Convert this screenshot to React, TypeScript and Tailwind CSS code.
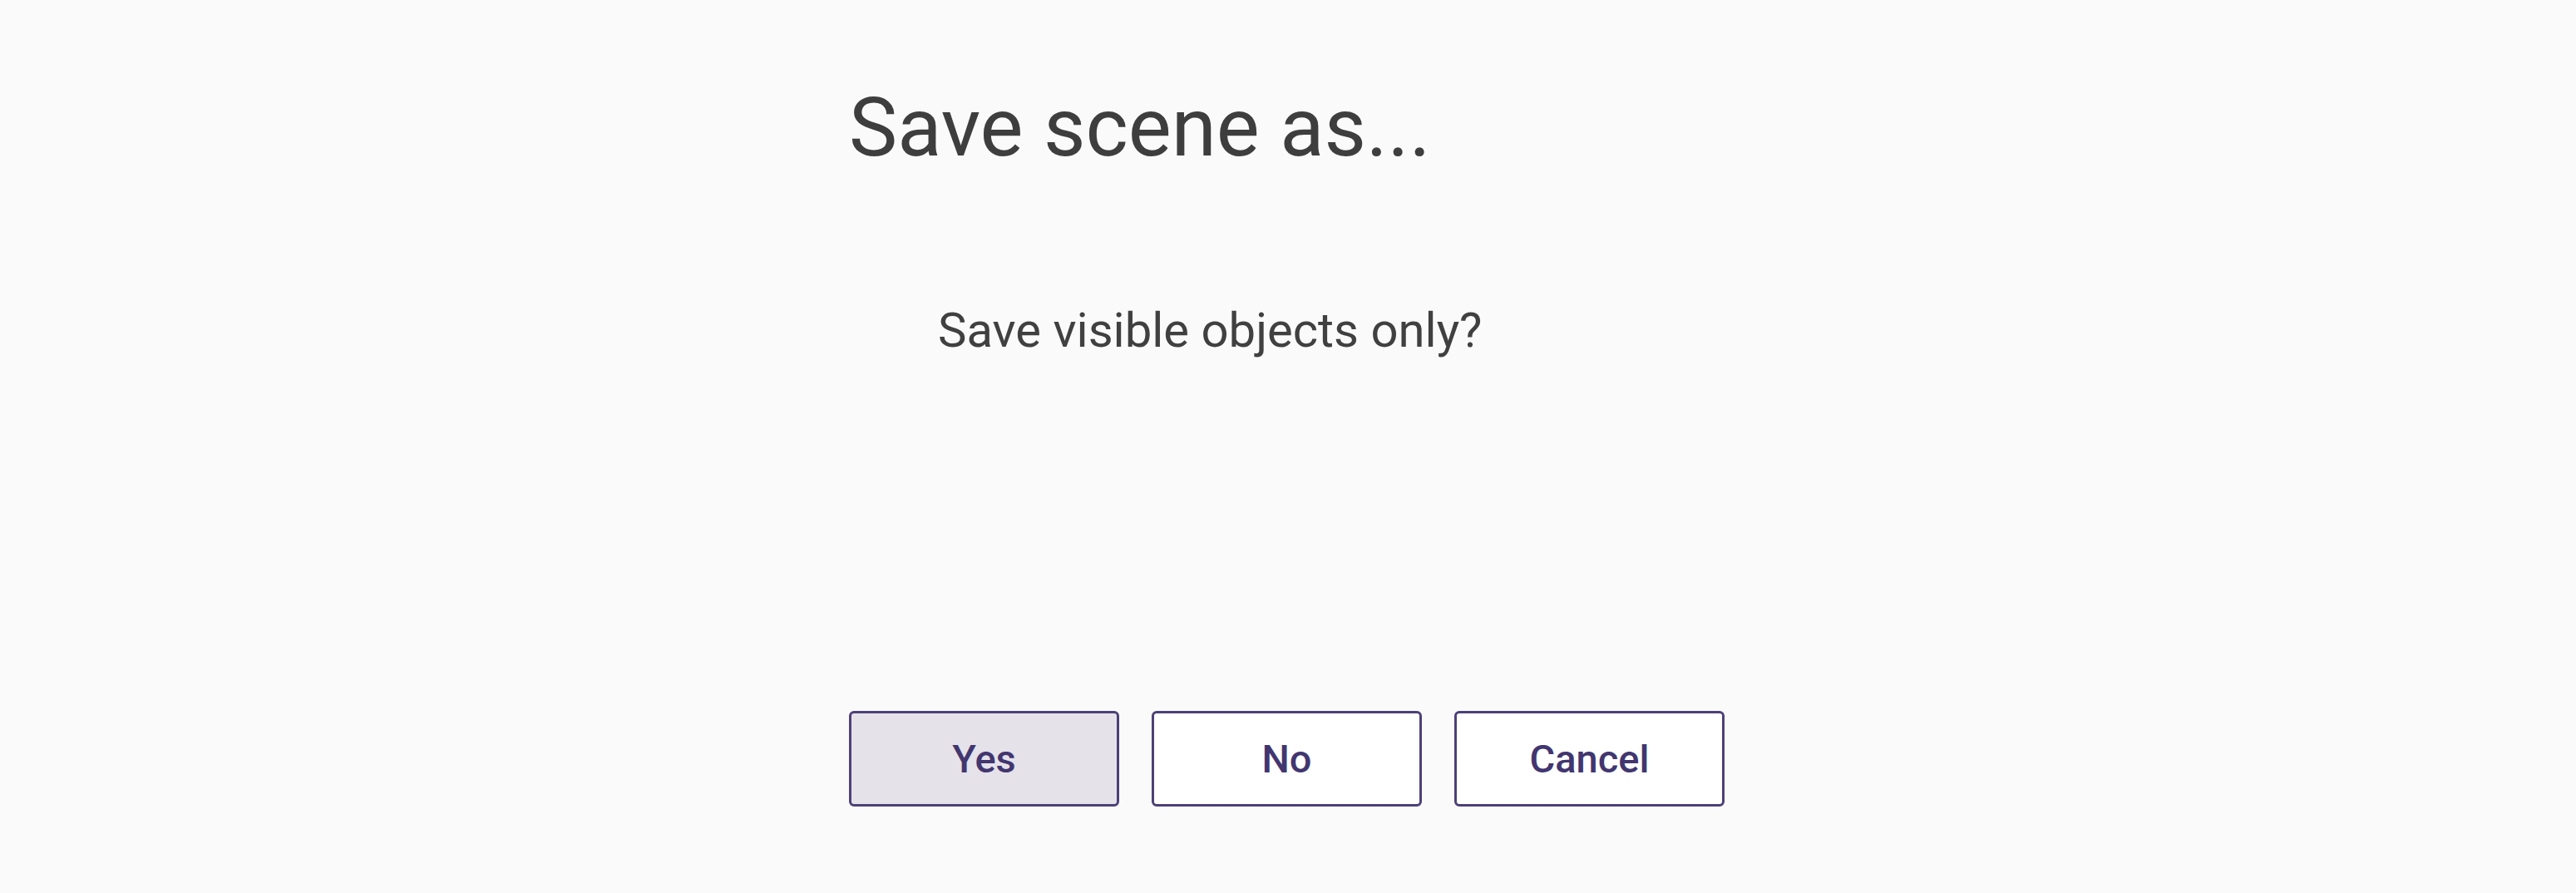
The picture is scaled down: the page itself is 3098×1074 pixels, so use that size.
import React from "react";

export default function App() {
  return (
    <div
      className="min-h-screen w-full bg-[#fafafa] flex justify-center"
      style={{ fontFamily: "Roboto, 'Noto Sans', sans-serif" }}
    >
      <div className="w-[1056px] flex flex-col pt-[105px]">
        <h1 className="text-[98px] leading-none font-normal text-[#3e3e3e]">
          Save scene as...
        </h1>
        <p className="mt-[165px] pl-[107px] text-[58px] leading-none text-[#404040]">
          Save visible objects only?
        </p>
        <div className="mt-[429px] flex gap-[39px]">
          <button className="w-[325px] h-[115px] rounded-md border-[3px] border-[#4d4177] bg-[#e5e2ea] text-[47px] font-medium text-[#42366f] leading-none">
            Yes
          </button>
          <button className="w-[325px] h-[115px] rounded-md border-[3px] border-[#4d4177] bg-white text-[47px] font-medium text-[#42366f] leading-none">
            No
          </button>
          <button className="w-[325px] h-[115px] rounded-md border-[3px] border-[#4d4177] bg-white text-[47px] font-medium text-[#42366f] leading-none">
            Cancel
          </button>
        </div>
      </div>
    </div>
  );
}
